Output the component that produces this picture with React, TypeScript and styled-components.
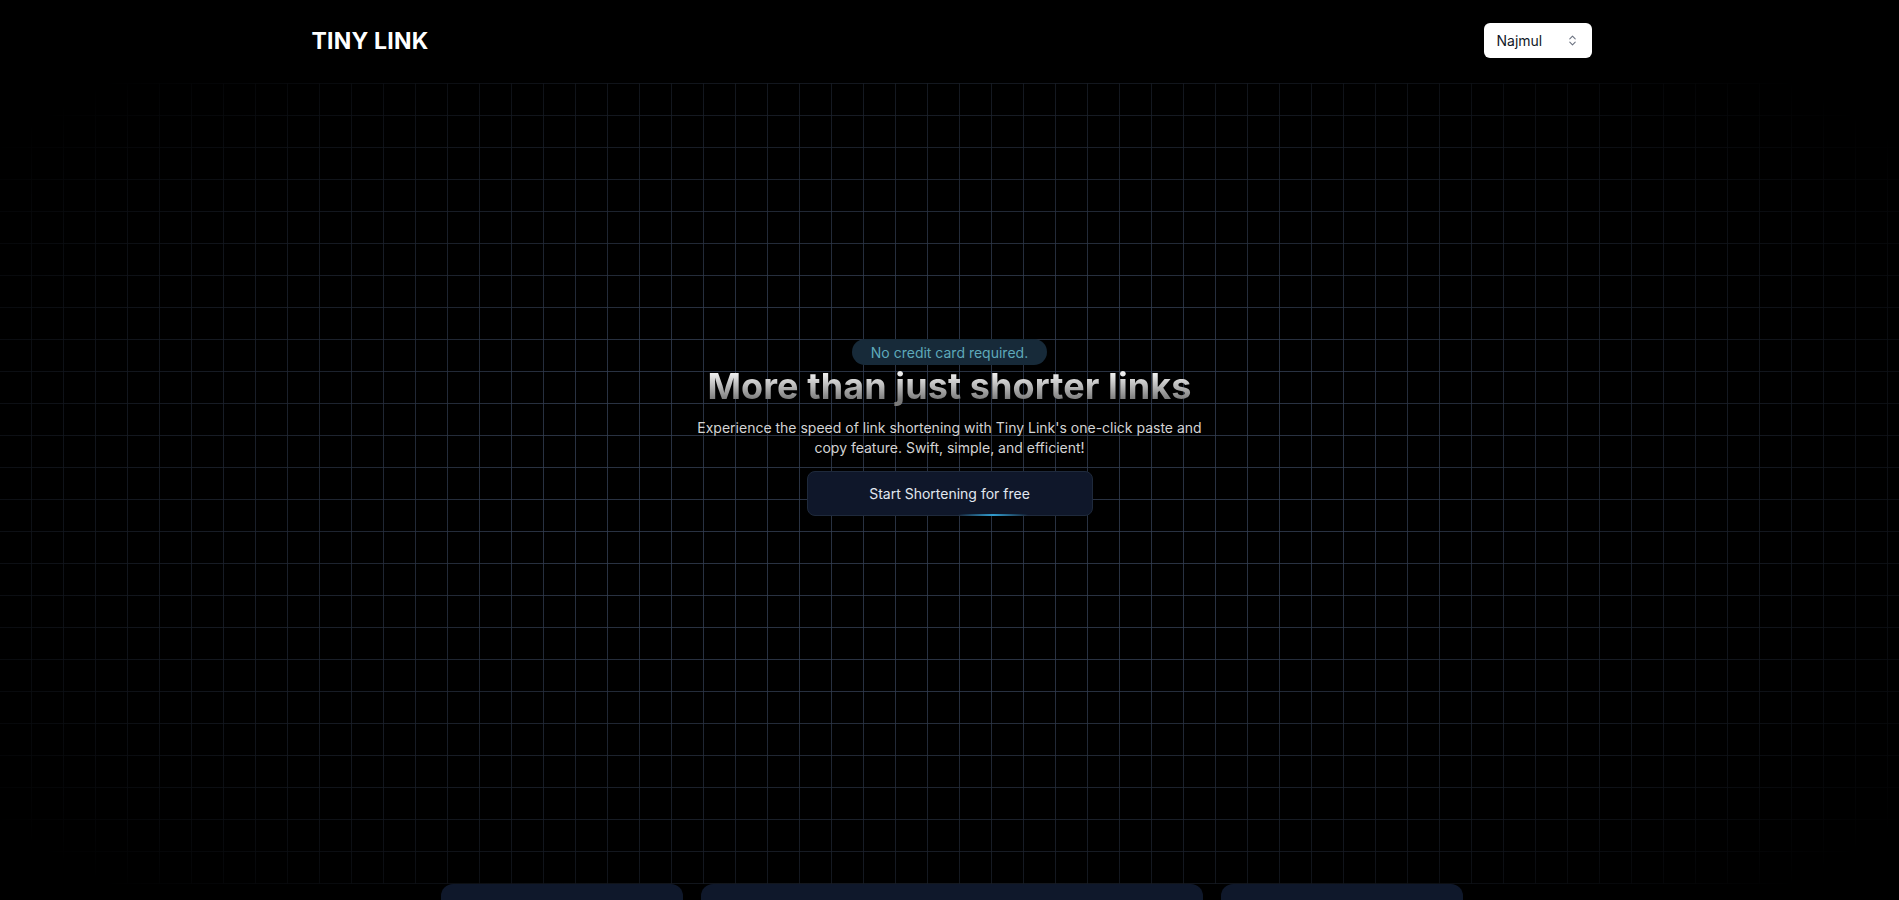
import React from "react";
import styled, { createGlobalStyle } from "styled-components";

const GlobalStyle = createGlobalStyle`
  html { scrollbar-width: none; }
  html::-webkit-scrollbar { display: none; }
  body {
    margin: 0;
    background: #000;
    color: #fff;
    font-family: Inter, "Noto Sans", "Liberation Sans", sans-serif;
  }
  * { box-sizing: border-box; }
`;

const Page = styled.div`
  min-height: 100vh;
  background: #000;
  overflow: hidden;
`;

const Header = styled.header`
  height: 83px;
  display: flex;
  justify-content: center;
`;

const HeaderInner = styled.div`
  width: 1280px;
  display: flex;
  align-items: center;
  justify-content: space-between;
  padding-bottom: 2px;
`;

const Logo = styled.div`
  font-size: 23px;
  font-weight: 700;
  letter-spacing: 0.2px;
  color: #fff;
  padding-left: 2px;
`;

const Select = styled.button`
  width: 108px;
  height: 35px;
  background: #fff;
  border: none;
  border-radius: 6px;
  display: flex;
  align-items: center;
  justify-content: space-between;
  padding: 0 13px 0 13px;
  font-family: Inter, "Noto Sans", sans-serif;
  font-size: 14px;
  color: #111827;
  margin-right: -2px;
`;

const Hero = styled.section`
  position: relative;
  height: 801px;
  display: flex;
  flex-direction: column;
  align-items: center;
  padding-top: 256px;
`;

const GridBg = styled.div`
  position: absolute;
  inset: 0;
  background-image:
    linear-gradient(to right, rgba(51, 62, 82, 0.8) 1px, transparent 1px),
    linear-gradient(to bottom, rgba(51, 62, 82, 0.8) 1px, transparent 1px);
  background-size: 32px 32px;
  background-position: 31px 0;
  -webkit-mask-image: radial-gradient(ellipse 62% 72% at 50% 50%, #000 35%, transparent 100%);
  mask-image: radial-gradient(ellipse 62% 72% at 50% 50%, #000 35%, transparent 100%);
  pointer-events: none;
`;

const Content = styled.div`
  position: relative;
  display: flex;
  flex-direction: column;
  align-items: center;
  text-align: center;
`;

const Badge = styled.span`
  display: inline-flex;
  align-items: center;
  height: 26px;
  padding: 0 19px;
  border-radius: 999px;
  background: #172a39;
  color: #5ea9ba;
  font-size: 14px;
`;

const Title = styled.h1`
  margin: 1px 0 0;
  font-size: 36px;
  line-height: 40px;
  font-weight: 700;
  letter-spacing: 0.1px;
  background: linear-gradient(to bottom, #eeeeee 20%, #7a7a7a 85%);
  -webkit-background-clip: text;
  background-clip: text;
  color: transparent;
`;

const Lead = styled.p`
  margin: 12px 0 0;
  max-width: 512px;
  font-size: 14px;
  line-height: 20px;
  color: #d4d4d4;
`;

const CtaButton = styled.button`
  position: relative;
  margin-top: 13px;
  width: 286px;
  height: 45px;
  border-radius: 8px;
  background: #0f172a;
  border: 1px solid #1e293b;
  color: #e2e8f0;
  font-family: Inter, "Noto Sans", sans-serif;
  font-size: 14px;
  &::after {
    content: "";
    position: absolute;
    left: 150px;
    bottom: -1px;
    width: 70px;
    height: 2px;
    background: linear-gradient(to right, transparent, #38bdf8 50%, transparent);
    opacity: 0.8;
  }
`;

const Cards = styled.div`
  width: 1027px;
  margin: 0 auto;
  padding-left: 5px;
  display: grid;
  grid-template-columns: repeat(4, 1fr);
  gap: 18px;
`;

const Card = styled.div<{ $span?: number }>`
  grid-column: span ${(p) => p.$span ?? 1};
  height: 240px;
  border-radius: 12px;
  background: #0f182b;
`;

const ChevronIcon = () => (
  <svg width="13" height="13" viewBox="0 0 24 24" fill="none" stroke="#6b7280" strokeWidth="2" strokeLinecap="round" strokeLinejoin="round">
    <path d="m7 15 5 5 5-5" />
    <path d="m7 9 5-5 5 5" />
  </svg>
);

export default function App() {
  return (
    <Page>
      <GlobalStyle />
      <Header>
        <HeaderInner>
          <Logo>TINY LINK</Logo>
          <Select>
            <span>Najmul</span>
            <ChevronIcon />
          </Select>
        </HeaderInner>
      </Header>
      <Hero>
        <GridBg />
        <Content>
          <Badge>No credit card required.</Badge>
          <Title>More than just shorter links</Title>
          <Lead>
            Experience the speed of link shortening with Tiny Link's one-click paste and copy feature. Swift, simple, and efficient!
          </Lead>
          <CtaButton>Start Shortening for free</CtaButton>
        </Content>
      </Hero>
      <Cards>
        <Card />
        <Card $span={2} />
        <Card />
      </Cards>
    </Page>
  );
}
